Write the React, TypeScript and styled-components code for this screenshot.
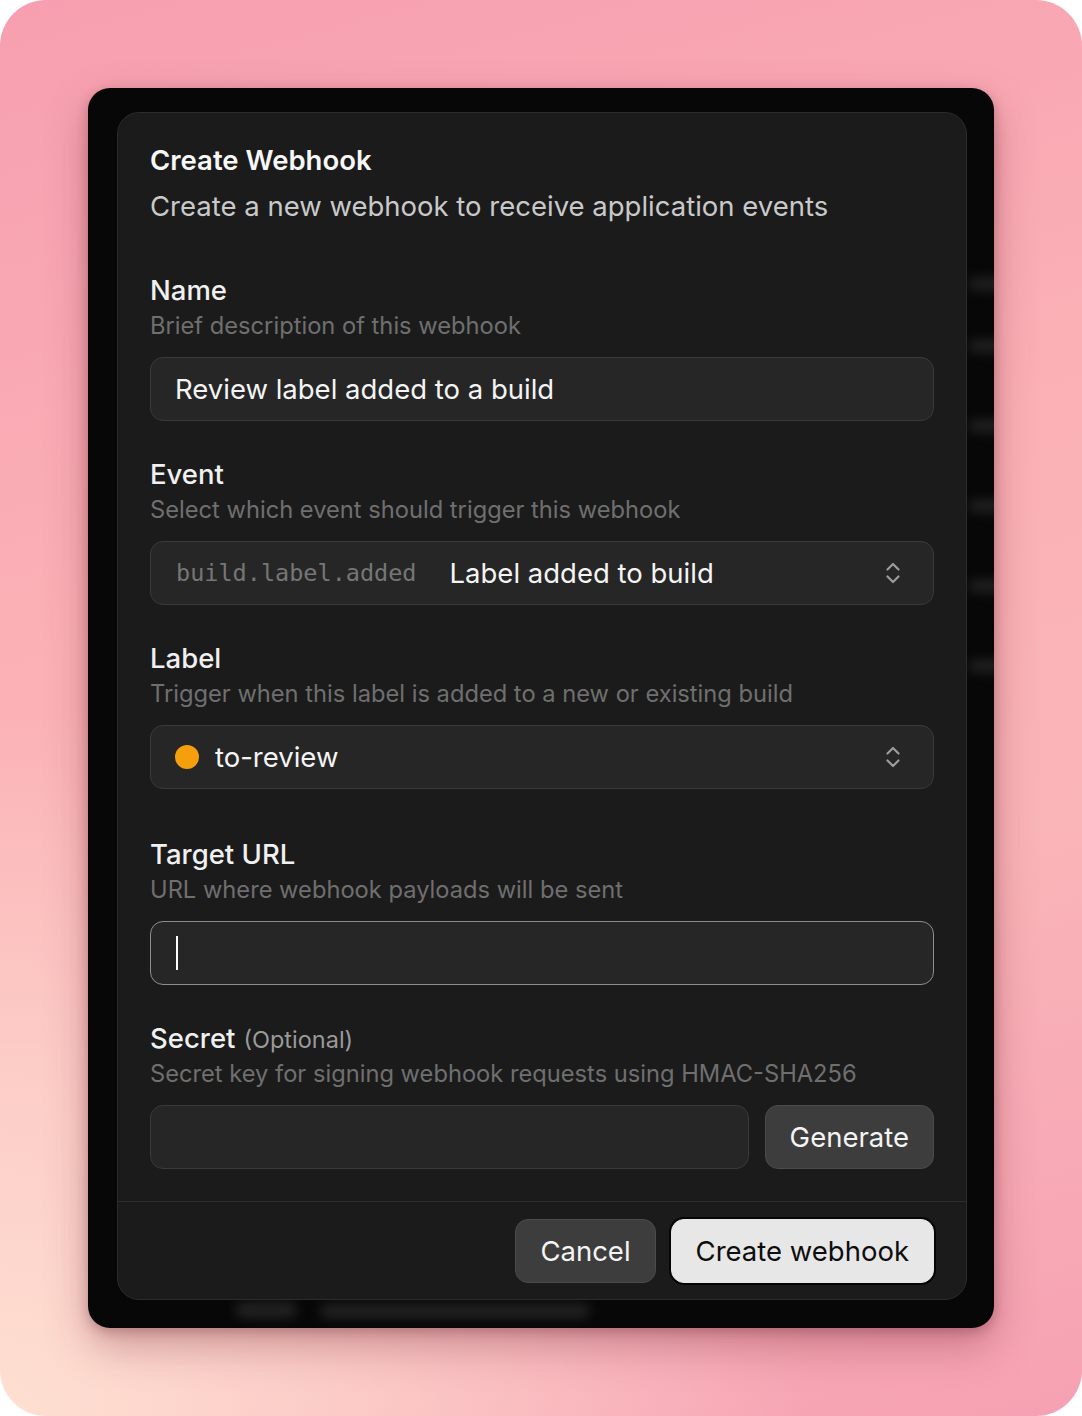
import React from "react";
import styled, { createGlobalStyle } from "styled-components";

const GlobalStyle = createGlobalStyle`
  html, body {
    margin: 0;
    padding: 0;
    background: #ffffff;
  }
  * {
    box-sizing: border-box;
  }
`;

const Stage = styled.div`
  width: 1082px;
  height: 1416px;
  padding: 88px 88px 0;
  border-radius: 46px;
  overflow: hidden;
  background:
    radial-gradient(ellipse 75% 50% at 0% 100%, #fee0d2 0%, rgba(254, 224, 210, 0.6) 45%, rgba(254, 224, 210, 0) 100%),
    linear-gradient(165deg, #f79fb0 0%, #fbb1b6 40%, #fab5b8 65%, #f6a1b3 100%);
  font-family: Inter, "Noto Sans", sans-serif;
`;

const Frame = styled.div`
  position: relative;
  width: 906px;
  height: 1240px;
  padding: 24px 27px 28px 29px;
  background: #070707;
  border-radius: 22px;
  overflow: hidden;
  box-shadow: 0 18px 42px rgba(120, 40, 55, 0.35), 0 4px 12px rgba(60, 10, 20, 0.25);
`;

const Ghost = styled.div<{ $top: number; $left: number; $w: number; $h: number }>`
  position: absolute;
  top: ${(p) => p.$top}px;
  left: ${(p) => p.$left}px;
  width: ${(p) => p.$w}px;
  height: ${(p) => p.$h}px;
  background: #3a3a3a;
  border-radius: 8px;
  filter: blur(6px);
  opacity: 0.55;
`;

const Dialog = styled.div`
  position: relative;
  z-index: 1;
  height: 100%;
  display: flex;
  flex-direction: column;
  background: #1b1b1b;
  border: 1px solid #2c2c2c;
  border-radius: 22px;
`;

const Body = styled.div`
  flex: 1 1 auto;
  min-height: 0;
  padding: 31px 32px 32px;
`;

const Title = styled.h2`
  margin: 0;
  font-size: 27.5px;
  line-height: 32px;
  font-weight: 600;
  color: #f7f7f7;
`;

const Subtitle = styled.p`
  margin: 14px 0 0;
  font-size: 27.5px;
  line-height: 32px;
  font-weight: 400;
  color: #c9c9c9;
`;

const Field = styled.div<{ $gap: number }>`
  margin-top: ${(p) => p.$gap}px;
  display: flex;
  flex-direction: column;
`;

const Label = styled.div`
  font-size: 27.5px;
  line-height: 32px;
  font-weight: 500;
  color: #f0f0f0;
`;

const Optional = styled.span`
  font-size: 23.5px;
  line-height: 1;
  font-weight: 400;
  color: #9a9a9a;
  margin-left: 8px;
`;

const Hint = styled.div`
  margin-top: 5px;
  margin-bottom: 16px;
  font-size: 23.7px;
  line-height: 30px;
  color: #6f6f6f;
`;

const Box = styled.div<{ $focused?: boolean }>`
  flex: 1 0 auto;
  height: 64px;
  display: flex;
  align-items: center;
  padding: 0 33px 0 24px;
  background: #262626;
  border: 1px solid ${(p) => (p.$focused ? "#8e8e8e" : "#3a3a3a")};
  border-radius: 13px;
  font-size: 27.5px;
  color: #f4f4f4;
`;

const Value = styled.span`
  flex: 1;
  white-space: nowrap;
`;

const Code = styled.span`
  font-family: "DejaVu Sans Mono", "Liberation Mono", monospace;
  font-size: 23.5px;
  color: #767676;
  margin-right: 33px;
  margin-left: 1px;
`;

const Dot = styled.span<{ $color: string }>`
  width: 24px;
  height: 24px;
  border-radius: 50%;
  background: ${(p) => p.$color};
  margin-right: 16px;
`;

const Caret = styled.span`
  width: 2px;
  height: 34px;
  background: #ffffff;
  margin-left: 1px;
`;

const Row = styled.div`
  display: flex;
  gap: 16px;
`;

const Button = styled.button<{ $primary?: boolean }>`
  flex: none;
  height: 64px;
  padding: 0 24px;
  border-radius: 13px;
  font-family: Inter, "Noto Sans", sans-serif;
  font-size: 27.5px;
  font-weight: 400;
  color: ${(p) => (p.$primary ? "#0e0e0e" : "#f4f4f4")};
  background: ${(p) => (p.$primary ? "#e7e7e7" : "#3d3d3d")};
  border: 1px solid ${(p) => (p.$primary ? "#e7e7e7" : "#4b4b4b")};
  box-shadow: ${(p) => (p.$primary ? "0 0 0 2px #050505" : "none")};
`;

const Divider = styled.div`
  flex: none;
  height: 1px;
  background: #2e2e2e;
`;

const Footer = styled.div`
  flex: none;
  display: flex;
  justify-content: flex-end;
  gap: 15px;
  padding: 17px 32px 16px;
`;

const Chevrons = () => (
  <svg width="14" height="24" viewBox="0 0 14 24" fill="none" stroke="#9c9c9c" strokeWidth="2.2" strokeLinecap="round" strokeLinejoin="round">
    <path d="M1.5 8.5 L7 3 L12.5 8.5" />
    <path d="M1.5 15.5 L7 21 L12.5 15.5" />
  </svg>
);

const ghosts = [
  { top: 190, left: 880, w: 70, h: 12 },
  { top: 252, left: 880, w: 70, h: 12 },
  { top: 332, left: 880, w: 70, h: 12 },
  { top: 412, left: 880, w: 70, h: 12 },
  { top: 492, left: 880, w: 70, h: 12 },
  { top: 572, left: 880, w: 70, h: 12 },
  { top: 1214, left: 147, w: 62, h: 16 },
  { top: 1216, left: 232, w: 270, h: 14 },
];

export default function App() {
  return (
    <>
      <GlobalStyle />
      <Stage>
        <Frame>
          {ghosts.map((g, i) => (
            <Ghost key={i} $top={g.top} $left={g.left} $w={g.w} $h={g.h} />
          ))}
          <Dialog>
            <Body>
              <Title>Create Webhook</Title>
              <Subtitle>Create a new webhook to receive application events</Subtitle>

              <Field $gap={52}>
                <Label>Name</Label>
                <Hint>Brief description of this webhook</Hint>
                <Box>
                  <Value>Review label added to a build</Value>
                </Box>
              </Field>

              <Field $gap={37}>
                <Label>Event</Label>
                <Hint>Select which event should trigger this webhook</Hint>
                <Box>
                  <Code>build.label.added</Code>
                  <Value>Label added to build</Value>
                  <Chevrons />
                </Box>
              </Field>

              <Field $gap={37}>
                <Label>Label</Label>
                <Hint>Trigger when this label is added to a new or existing build</Hint>
                <Box>
                  <Dot $color="#f59f0c" />
                  <Value>to-review</Value>
                  <Chevrons />
                </Box>
              </Field>

              <Field $gap={49}>
                <Label>Target URL</Label>
                <Hint>URL where webhook payloads will be sent</Hint>
                <Box $focused>
                  <Caret />
                </Box>
              </Field>

              <Field $gap={37}>
                <Label>
                  Secret<Optional>(Optional)</Optional>
                </Label>
                <Hint>Secret key for signing webhook requests using HMAC-SHA256</Hint>
                <Row>
                  <Box />
                  <Button>Generate</Button>
                </Row>
              </Field>
            </Body>
            <Divider />
            <Footer>
              <Button>Cancel</Button>
              <Button $primary>Create webhook</Button>
            </Footer>
          </Dialog>
        </Frame>
      </Stage>
    </>
  );
}
